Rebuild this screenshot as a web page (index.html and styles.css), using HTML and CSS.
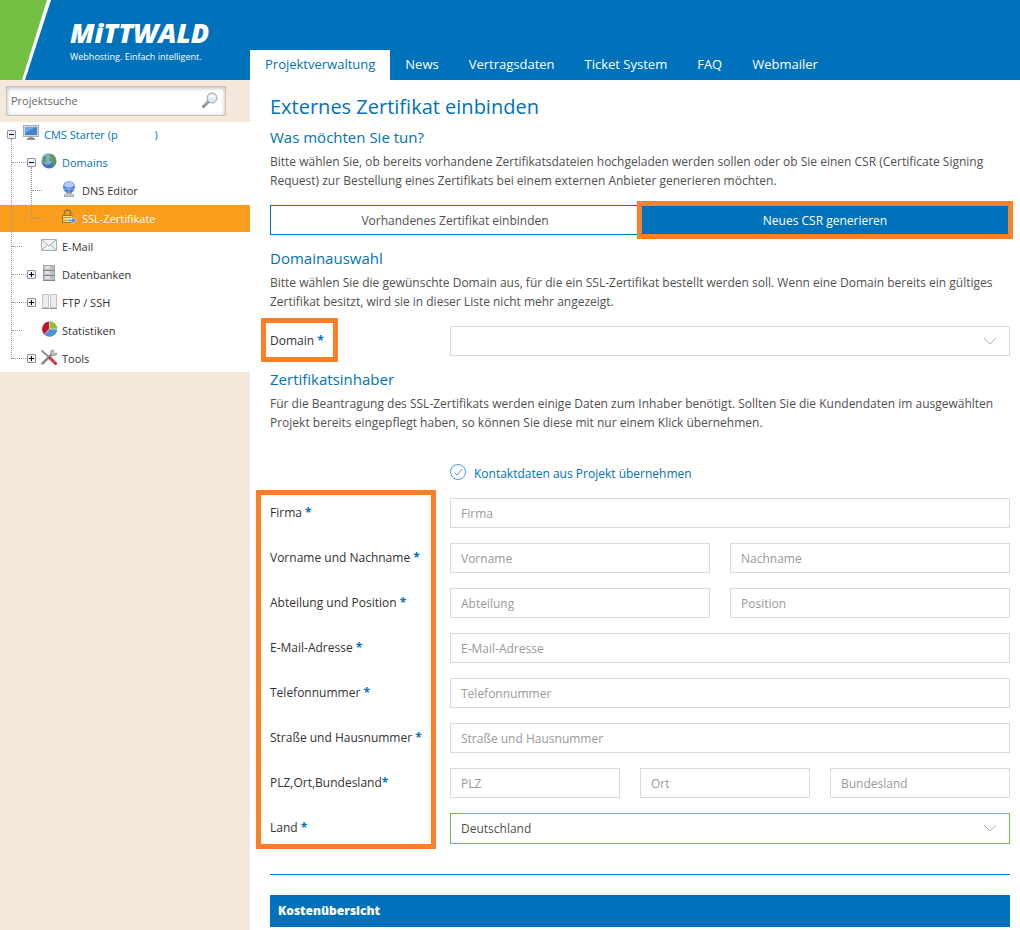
FILE: index.html
```html
<!DOCTYPE html>
<html lang="de">

<head>
    <meta charset="UTF-8">
    <meta name="viewport" content="width=device-width, initial-scale=1.0">
    <title>Externes Zertifikat einbinden</title>
    <link rel="stylesheet" href="styles.css">
</head>

<body>
    <header class="header">
        <a href="#" class="brand">
            <svg class="brand-stripe" width="52" height="80" viewBox="0 0 52 80">
                <path d="M0 0H51L25 80H0z" fill="#fff" />
                <path d="M0 0H47L22 80H0z" fill="#72bf44" />
            </svg>
            <span class="brand-text">
                <span class="brand-name">MiTTWALD</span>
                <span class="brand-claim">Webhosting. Einfach intelligent.</span>
            </span>
        </a>
        <nav class="nav">
            <a href="#" class="active">Projektverwaltung</a>
            <a href="#">News</a>
            <a href="#">Vertragsdaten</a>
            <a href="#">Ticket System</a>
            <a href="#">FAQ</a>
            <a href="#">Webmailer</a>
        </nav>
    </header>

    <div class="page">
        <aside class="sidebar">
            <form class="search">
                <input type="text" placeholder="Projektsuche" aria-label="Projektsuche">
                <button type="button" aria-label="Suchen">
                    <svg width="16" height="16" viewBox="0 0 16 16">
                        <path d="M6.5 9.5L1.5 14.5" stroke="#888" stroke-width="3" stroke-linecap="round" />
                        <path d="M6 9.500L2 13.500" stroke="#ccc" stroke-width="1" />
                        <circle cx="10" cy="6" r="5" fill="#dde8f8" stroke="#a0a0a4" />
                        <path d="M7 6a3 3 0 0 1 6 0z" fill="#f6faff" />
                    </svg>
                </button>
            </form>

            <ul class="tree">
                <li>
                    <div class="row root">
                        <button class="toggle" aria-label="Einklappen">
                            <svg width="9" height="9" viewBox="0 0 9 9"><path d="M2 4.500h5" stroke="#000" /></svg>
                        </button>
                        <svg class="icon" width="16" height="16" viewBox="0 0 16 16">
                            <path d="M0 1h16v12H0z" fill="#a9adb1" />
                            <path d="M1 2h14v10H1z" fill="#d5d8db" />
                            <path d="M2 3h12v8H2z" fill="#3f86d0" />
                            <path d="M2 3h11L2 9z" fill="#6fa8e4" />
                            <path d="M6 13h4v1H6zM4 14h8v2H4z" fill="#8d9196" />
                        </svg>
                        <a href="#">CMS Starter <span class="account">(p <i></i>)</span></a>
                    </div>
                    <ul class="level-1">
                        <li>
                            <div class="row open">
                                <button class="toggle" aria-label="Einklappen">
                                    <svg width="9" height="9" viewBox="0 0 9 9"><path d="M2 4.500h5" stroke="#000" /></svg>
                                </button>
                                <svg class="icon" width="16" height="16" viewBox="0 0 16 16">
                                    <circle cx="8" cy="8" r="7.500" fill="#3f78bd" />
                                    <circle cx="6.500" cy="6" r="5.500" fill="#7fabdd" />
                                    <path d="M8 1.500l3-.5 3 3 1 3-1 4-2 2-1-2 .5-2-2.500-1.500L8 6l2-1.500zM1.500 5L4 3l1.500 1-1 2.500L6 8.500 4.500 10 2 8z" fill="#5da048" />
                                </svg>
                                <a href="#">Domains</a>
                            </div>
                            <ul class="level-2">
                                <li>
                                    <div class="row">
                                        <svg class="icon" width="16" height="16" viewBox="0 0 16 16">
                                            <path d="M5 11h6v2h2v3H3v-3h2z" fill="#a7abb0" />
                                            <path d="M4 14h8" stroke="#e2e4e6" />
                                            <circle cx="8" cy="6" r="6" fill="#4a82d8" />
                                            <path d="M3 5a5 4.500 0 0 1 10 0q-5 3-10 0z" fill="#a9cbf5" />
                                            <path d="M8 0v12M2.500 8h11" stroke="#cfe2fa" stroke-width=".5" />
                                        </svg>
                                        <a href="#">DNS Editor</a>
                                    </div>
                                </li>
                                <li>
                                    <div class="row selected">
                                        <svg class="icon" width="16" height="16" viewBox="0 0 16 16">
                                            <path d="M3.500 7V4a3 3 0 0 1 6 0v3" fill="none" stroke="#8a7a50" stroke-width="1.500" />
                                            <path d="M1.500 6.500h10v7h-10z" fill="#f3d77c" stroke="#94762c" />
                                            <path d="M2 8.500h9M2 11.500h9" stroke="#c9a240" />
                                            <path d="M7 10.500h4V8l4.500 3.500L11 15v-2.500H7z" fill="#4a90e2" stroke="#fff" stroke-width=".5" />
                                        </svg>
                                        <a href="#">SSL-Zertifikate</a>
                                    </div>
                                </li>
                            </ul>
                        </li>
                        <li>
                            <div class="row leaf">
                                <svg class="icon" width="16" height="16" viewBox="0 0 16 16">
                                    <path d="M.5 2.500h15v11H.5z" fill="#eef2f3" stroke="#a5adb0" />
                                    <path d="M1 3l7 6 7-6M1 13l5-5M15 13l-5-5" fill="none" stroke="#a5adb0" />
                                </svg>
                                <a href="#">E-Mail</a>
                            </div>
                        </li>
                        <li>
                            <div class="row">
                                <button class="toggle" aria-label="Ausklappen">
                                    <svg width="9" height="9" viewBox="0 0 9 9"><path d="M2 4.500h5M4.500 2v5" stroke="#000" /></svg>
                                </button>
                                <svg class="icon" width="16" height="16" viewBox="0 0 16 16">
                                    <path d="M2 0h12v16H2z" fill="#a4a7a7" />
                                    <path d="M3 1h10v4H3zM3 6h10v4H3zM3 11h10v4H3z" fill="#bcbfbf" />
                                    <path d="M4 1h5v3H4zM4 6h5v3H4zM4 11h5v3H4z" fill="#dfe1e1" />
                                    <path d="M2 5.500h12M2 10.500h12M2 15.500h12" stroke="#808484" />
                                </svg>
                                <a href="#">Datenbanken</a>
                            </div>
                        </li>
                        <li>
                            <div class="row">
                                <button class="toggle" aria-label="Ausklappen">
                                    <svg width="9" height="9" viewBox="0 0 9 9"><path d="M2 4.500h5M4.500 2v5" stroke="#000" /></svg>
                                </button>
                                <svg class="icon" width="16" height="16" viewBox="0 0 16 16">
                                    <path d="M1.500 1.500h6v13h-6zM9.500 1.500h6v13h-6z" fill="#ececec" stroke="#c4c4c4" />
                                    <path d="M1 15.500h15" stroke="#999" />
                                </svg>
                                <a href="#">FTP / SSH</a>
                            </div>
                        </li>
                        <li>
                            <div class="row leaf">
                                <svg class="icon" width="16" height="16" viewBox="0 0 16 16">
                                    <circle cx="8.500" cy="8" r="7.500" fill="#c1122f" />
                                    <path d="M8.500 8V.5a7.500 7.500 0 0 1 7.500 7.500z" fill="#86c232" />
                                    <path d="M8.500 8H16a7.500 7.500 0 0 1-12.800 5.300z" fill="#4f94d6" />
                                    <path d="M8.500.5V8H16M8.500 8L3.200 13.300" stroke="#fff" stroke-width=".6" fill="none" />
                                </svg>
                                <a href="#">Statistiken</a>
                            </div>
                        </li>
                        <li>
                            <div class="row">
                                <button class="toggle" aria-label="Ausklappen">
                                    <svg width="9" height="9" viewBox="0 0 9 9"><path d="M2 4.500h5M4.500 2v5" stroke="#000" /></svg>
                                </button>
                                <svg class="icon" width="16" height="16" viewBox="0 0 16 16">
                                    <path d="M1.500 14.500L11 5" stroke="#8c8c8c" stroke-width="2.500" stroke-linecap="round" />
                                    <path d="M13 1.200Q9.500.5 9.500 3.500T13 6.500 15.500 4l-2.500.5-1-1.500z" fill="#c4c4c4" stroke="#8c8c8c" stroke-width=".8" />
                                    <path d="M.5 1.500L9 9" stroke="#8c8c8c" stroke-width="1.800" />
                                    <path d="M9 9l5.500 5.500" stroke="#c8252c" stroke-width="3" stroke-linecap="round" />
                                    <path d="M9 9l5 5" stroke="#ec7a7d" stroke-width=".8" />
                                </svg>
                                <a href="#">Tools</a>
                            </div>
                        </li>
                    </ul>
                </li>
            </ul>
        </aside>

        <main class="content">
            <h1>Externes Zertifikat einbinden</h1>

            <h2>Was möchten Sie tun?</h2>
            <p>Bitte wählen Sie, ob bereits vorhandene Zertifikatsdateien hochgeladen werden sollen oder ob Sie einen
                CSR (Certificate Signing Request) zur Bestellung eines Zertifikats bei einem externen Anbieter
                generieren möchten.</p>
            <div class="switch">
                <button type="button">Vorhandenes Zertifikat einbinden</button>
                <button type="button" class="active">Neues CSR generieren</button>
            </div>

            <h2>Domainauswahl</h2>
            <p>Bitte wählen Sie die gewünschte Domain aus, für die ein SSL-Zertifikat bestellt werden soll. Wenn eine
                Domain bereits ein gültiges Zertifikat besitzt, wird sie in dieser Liste nicht mehr angezeigt.</p>
            <div class="form-row">
                <label for="domain"><span class="marked">Domain <b>*</b></span></label>
                <div class="select">
                    <select id="domain">
                        <option></option>
                    </select>
                    <svg width="14" height="8" viewBox="0 0 14 8"><path d="M1 1l6 6 6-6" /></svg>
                </div>
            </div>

            <h2>Zertifikatsinhaber</h2>
            <p>Für die Beantragung des SSL-Zertifikats werden einige Daten zum Inhaber benötigt. Sollten Sie die
                Kundendaten im ausgewählten Projekt bereits eingepflegt haben, so können Sie diese mit nur einem Klick
                übernehmen.</p>
            <a href="#" class="take-over">
                <svg width="16" height="16" viewBox="0 0 16 16">
                    <circle cx="8" cy="8" r="7.500" />
                    <path d="M4.500 8.500l2.500 2.500 5-6" />
                </svg>
                Kontaktdaten aus Projekt übernehmen
            </a>

            <form class="owner">
                <div class="form-row">
                    <label for="firma">Firma <b>*</b></label>
                    <input type="text" id="firma" placeholder="Firma">
                </div>
                <div class="form-row">
                    <label for="vorname">Vorname und Nachname <b>*</b></label>
                    <div class="two">
                        <input type="text" id="vorname" placeholder="Vorname">
                        <input type="text" placeholder="Nachname" aria-label="Nachname">
                    </div>
                </div>
                <div class="form-row">
                    <label for="abteilung">Abteilung und Position <b>*</b></label>
                    <div class="two">
                        <input type="text" id="abteilung" placeholder="Abteilung">
                        <input type="text" placeholder="Position" aria-label="Position">
                    </div>
                </div>
                <div class="form-row">
                    <label for="email">E-Mail-Adresse <b>*</b></label>
                    <input type="email" id="email" placeholder="E-Mail-Adresse">
                </div>
                <div class="form-row">
                    <label for="telefon">Telefonnummer <b>*</b></label>
                    <input type="tel" id="telefon" placeholder="Telefonnummer">
                </div>
                <div class="form-row">
                    <label for="strasse">Straße und Hausnummer <b>*</b></label>
                    <input type="text" id="strasse" placeholder="Straße und Hausnummer">
                </div>
                <div class="form-row">
                    <label for="plz">PLZ,Ort,Bundesland<b>*</b></label>
                    <div class="three">
                        <input type="text" id="plz" placeholder="PLZ">
                        <input type="text" placeholder="Ort" aria-label="Ort">
                        <input type="text" placeholder="Bundesland" aria-label="Bundesland">
                    </div>
                </div>
                <div class="form-row">
                    <label for="land">Land <b>*</b></label>
                    <div class="select valid">
                        <select id="land">
                            <option>Deutschland</option>
                        </select>
                        <svg width="14" height="8" viewBox="0 0 14 8"><path d="M1 1l6 6 6-6" /></svg>
                    </div>
                </div>
            </form>

            <hr>
            <h3>Kostenübersicht</h3>
        </main>
    </div>
</body>

</html>
```
FILE: styles.css
```css
*,
*::before,
*::after {
    box-sizing: border-box;
}

body {
    margin: 0;
    min-height: 100vh;
    display: flex;
    flex-direction: column;
    font-family: "Open Sans", "Noto Sans", sans-serif;
    font-size: 12px;
    line-height: 19px;
    color: #505050;
    background-color: #fff;
}

a {
    color: #0072bc;
    text-decoration: none;
}

input,
select,
button {
    font-family: inherit;
    font-size: 12px;
}

/* Header */
.header {
    display: flex;
    height: 80px;
    background-color: #0072bc;
}

.brand {
    display: flex;
    gap: 18px;
    width: 250px;
    flex-shrink: 0;
    color: #fff;
}

.brand-text {
    display: flex;
    flex-direction: column;
    padding-top: 15px;
}

.brand-name {
    font-size: 27px;
    font-weight: 800;
    font-style: italic;
    line-height: 36px;
}

.brand-claim {
    font-size: 9px;
    line-height: 12px;
}

.nav {
    display: flex;
    align-items: flex-end;
}

.nav a {
    padding: 0 15px 2px;
    font-size: 13px;
    font-weight: 500;
    line-height: 28px;
    color: #fff;
    white-space: nowrap;
}

.nav a.active {
    background-color: #fff;
    color: #0072bc;
}

.page {
    display: flex;
    flex: 1;
}

/* Sidebar */
.sidebar {
    width: 250px;
    flex-shrink: 0;
    background-color: #f5e8db;
}

.search {
    position: relative;
    margin: 6px 24px 6px 6px;
}

.search input {
    width: 100%;
    height: 30px;
    padding: 0 30px 2px 4px;
    border: 1px solid #c8c4c0;
    font-size: 11px;
    background-color: #fff;
    box-shadow: inset 0 1px 4px rgba(0, 0, 0, 0.3);
}

.search input::placeholder {
    color: #666;
    opacity: 1;
}

.search button {
    position: absolute;
    top: 6px;
    right: 8px;
    width: 16px;
    height: 16px;
    padding: 0;
    border: none;
    background: none;
}

.tree {
    background-color: #fff;
    font-size: 11px;
}

.tree,
.tree ul {
    position: relative;
    display: grid;
    gap: 1px;
    margin: 0;
    padding: 0;
    list-style: none;
}

.tree ul {
    margin-top: 1px;
}

.row {
    position: relative;
    display: flex;
    align-items: center;
    gap: 5px;
    height: 27px;
    padding-left: 27px;
}

.row a {
    color: #333;
}

.row.root {
    height: 26px;
    padding: 0 0 2px 7px;
}

.row.root .icon {
    margin-left: 2px;
}

.row.leaf {
    padding-left: 41px;
}

.level-2 .row {
    padding-left: 61px;
}

.row.root a,
.row.open a {
    color: #0072bc;
}

.row.selected {
    background-color: #f99d1c;
}

.row.selected a {
    color: #fff;
    font-weight: 500;
}

.account i {
    display: inline-block;
    width: 34px;
}

.icon {
    flex-shrink: 0;
    margin-bottom: 4px;
}

.toggle {
    position: relative;
    z-index: 2;
    display: flex;
    width: 9px;
    height: 9px;
    padding: 0;
    border: 1px solid #8c94a8;
    border-radius: 1px;
    background-color: #f2f3f6;
}

.toggle svg {
    margin: -1px;
    flex-shrink: 0;
}

/* dotted connector lines */
.level-1::before,
.level-2::before {
    content: "";
    position: absolute;
    z-index: 1;
    top: -10px;
    bottom: 13px;
    left: 11px;
    border-left: 1px dotted #999;
}

.level-2::before {
    left: 31px;
}

.level-1 .row::before {
    content: "";
    position: absolute;
    top: 13px;
    left: 12px;
    width: 14px;
    border-top: 1px dotted #999;
}

.level-1 .row.leaf::before {
    width: 10px;
}

.level-2 .row.row::before {
    left: 32px;
    width: 10px;
}

/* Content */
.content {
    flex: 1;
    min-width: 0;
    padding: 15px 10px 3px 20px;
}

h1,
h2 {
    margin: 0;
    font-weight: 400;
    color: #0072bc;
}

h1 {
    margin-bottom: 9px;
    font-size: 20px;
    line-height: 24px;
}

h2 {
    margin-bottom: 6px;
    font-size: 15px;
    line-height: 18px;
}

p {
    margin: 0 0 15px;
}

.switch {
    display: flex;
    margin-bottom: 14px;
}

.switch button {
    position: relative;
    flex: 1;
    height: 30px;
    border: 1px solid #0072bc;
    color: #505050;
    background-color: #fff;
}

.switch button.active {
    color: #fff;
    background-color: #0072bc;
}

/* orange highlight frames */
.switch button.active::after,
.marked::after,
.owner::after {
    content: "";
    position: absolute;
    border: 5px solid #ff7f27;
    pointer-events: none;
}

.switch button.active::after {
    inset: -5px -4px;
}

.marked {
    position: relative;
}

.marked::after {
    inset: -14px -14px -13px -9px;
}

.owner::after {
    top: -8px;
    bottom: -5px;
    left: -14px;
    width: 180px;
}

.form-row {
    display: grid;
    grid-template-columns: 180px 1fr;
    align-items: center;
}

label {
    padding-bottom: 2px;
    color: #333;
}

label b {
    color: #0072bc;
}

.content input,
.content select {
    width: 100%;
    min-width: 0;
    height: 30px;
    padding: 0 10px;
    border: 1px solid #d9d9d9;
    border-radius: 0;
    color: #505050;
    background-color: #fff;
}

.content input::placeholder {
    color: #999;
    opacity: 1;
}

.select {
    position: relative;
}

.content select {
    display: block;
    appearance: none;
}

.select svg {
    position: absolute;
    top: 11px;
    right: 13px;
    fill: none;
    stroke: #b4b4b4;
    pointer-events: none;
}

.content .valid select {
    height: 31px;
    border-color: #72bf44;
}

.form-row + h2 {
    margin-top: 14px;
}

.take-over {
    display: flex;
    align-items: center;
    gap: 8px;
    margin: 32px 0 14px 180px;
    line-height: 20px;
}

.take-over svg {
    margin-bottom: 4px;
    fill: none;
    stroke: #4d9cd0;
}

.owner {
    position: relative;
    display: grid;
    gap: 15px;
}

.two,
.three {
    display: grid;
    grid-template-columns: 13fr 14fr;
    gap: 20px;
}

.three {
    grid-template-columns: 17fr 17fr 18fr;
}

hr {
    margin: 30px 0 20px;
    border: none;
    border-top: 1px solid #0072bc;
}

h3 {
    margin: 0;
    padding: 0 8px;
    font-size: 12px;
    font-weight: 800;
    line-height: 32px;
    color: #fff;
    background-color: #0072bc;
}
```
